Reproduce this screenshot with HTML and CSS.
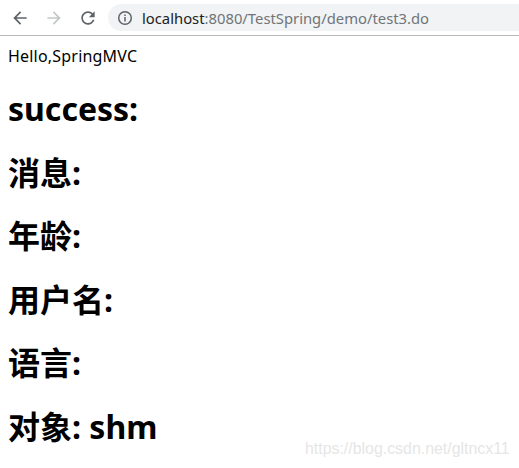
FILE: index.html
```html
<!DOCTYPE html>
<html lang="zh-CN">
<head>
<meta charset="utf-8">
<title>test3</title>
<link rel="stylesheet" href="styles.css">
</head>
<body>
<div class="toolbar">
  <span class="nav-btn">
    <svg viewBox="0 0 24 24" width="20" height="20"><path fill="#5f6368" d="M20 11H7.83l5.59-5.59L12 4l-8 8 8 8 1.41-1.41L7.83 13H20v-2z"/></svg>
  </span>
  <span class="nav-btn">
    <svg viewBox="0 0 24 24" width="20" height="20"><path fill="#c4c6c8" d="M4 11h12.17l-5.59-5.59L12 4l8 8-8 8-1.41-1.41L16.17 13H4v-2z"/></svg>
  </span>
  <span class="nav-btn">
    <svg viewBox="0 0 24 24" width="20" height="20"><path fill="#5f6368" d="M17.65 6.35C16.2 4.9 14.21 4 12 4c-4.42 0-7.99 3.58-7.99 8s3.57 8 7.99 8c3.73 0 6.84-2.55 7.73-6h-2.08c-.82 2.33-3.04 4-5.65 4-3.31 0-6-2.69-6-6s2.69-6 6-6c1.66 0 3.14.69 4.22 1.78L13 11h7V4l-2.35 2.35z"/></svg>
  </span>
  <div class="omnibox">
    <svg class="info" viewBox="0 0 16 16" width="16" height="16"><circle cx="8" cy="8" r="6.3" fill="none" stroke="#5f6368" stroke-width="1.5"/><rect x="7.25" y="7" width="1.5" height="4.5" fill="#5f6368"/><rect x="7.25" y="4.5" width="1.5" height="1.5" fill="#5f6368"/></svg>
    <span class="url"><span class="host">localhost</span>:8080/TestSpring/demo/test3.do</span>
  </div>
</div>
<main class="page">
  <div class="hello">Hello,SpringMVC</div>
  <h1 class="heading">success:</h1>
  <h1 class="heading">消息:</h1>
  <h1 class="heading">年龄:</h1>
  <h1 class="heading">用户名:</h1>
  <h1 class="heading">语言:</h1>
  <h1 class="heading">对象: shm</h1>
</main>
<div class="watermark">https://blog.csdn.net/gltncx11</div>
</body>
</html>
```
FILE: styles.css
```css
html, body {
  margin: 0;
  padding: 0;
  background: #ffffff;
}
body {
  width: 519px;
  height: 468px;
  overflow: hidden;
  position: relative;
  font-family: "Noto Sans", "Noto Sans CJK SC", sans-serif;
  color: #000;
}
.toolbar {
  height: 35px;
  border-bottom: 1px solid #b9b9b9;
  display: flex;
  align-items: center;
  background: #fff;
}
.nav-btn {
  width: 34px;
  height: 28px;
  display: flex;
  align-items: center;
  justify-content: center;
  flex: none;
}
.nav-btn:first-child {
  margin-left: 3px;
}
.omnibox {
  margin-left: 3px;
  height: 27px;
  flex: 1;
  min-width: 0;
  background: #f1f3f4;
  border-radius: 14px 0 0 14px;
  display: flex;
  align-items: center;
  padding-left: 9px;
  overflow: hidden;
}
.info {
  flex: none;
}
.url {
  margin-left: 9px;
  font-size: 14.8px;
  color: #70757a;
  white-space: nowrap;
}
.host {
  color: #202124;
}
.page {
  padding: 10px 8px 8px;
}
.hello {
  font-size: 16px;
  line-height: 21px;
  margin-bottom: 2px;
  letter-spacing: 0.2px;
}
.heading {
  font-size: 32px;
  line-height: 42px;
  font-weight: bold;
  margin: 21.44px 0;
}
.watermark {
  position: absolute;
  left: 305px;
  top: 440px;
  font-family: "Liberation Sans", Arial, sans-serif;
  font-size: 15.9px;
  color: #e6e6e6;
  white-space: nowrap;
}
```
